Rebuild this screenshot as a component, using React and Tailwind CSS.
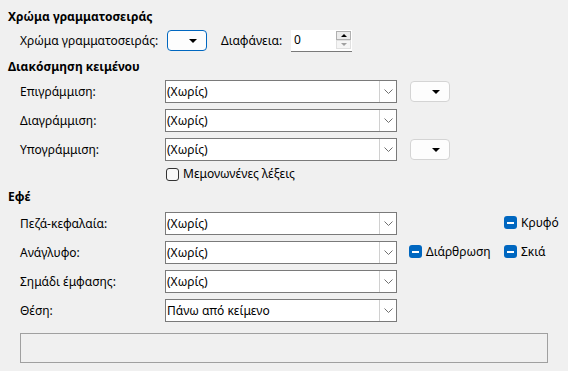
import React from "react";

const font = "font-['Noto_Sans','DejaVu_Sans',sans-serif]";

function Chevron() {
  return (
    <svg width="9" height="5" viewBox="0 0 9 5" className="block">
      <path d="M0.5 0.5 L4.5 4.5 L8.5 0.5" fill="none" stroke="#707070" strokeWidth="1" />
    </svg>
  );
}

function Tri({ color = "#000", w = 8, h = 4, up = false }) {
  return (
    <svg width={w} height={h} viewBox={`0 0 ${w} ${h}`} className="block">
      <path d={up ? `M0 ${h} L${w} ${h} L${w / 2} 0 Z` : `M0 0 L${w} 0 L${w / 2} ${h} Z`} fill={color} />
    </svg>
  );
}

function Combo({ value }) {
  return (
    <div className="flex h-[23px] w-[232px] items-stretch border border-[#7a7a7a] bg-white">
      <div className="flex flex-1 items-center pl-[1px] text-[12px] text-black">{value}</div>
      <div className="flex w-[17px] items-center justify-center border-l border-[#d0d0d0] bg-white">
        <Chevron />
      </div>
    </div>
  );
}

function ColorBtn({ active }) {
  return (
    <div
      className={
        "flex h-[21px] w-[40px] items-center justify-end rounded-[4px] bg-[#fdfdfd] pr-[9px] " +
        (active ? "border border-[#0067c0]" : "border border-[#d4d4d4]")
      }
    >
      <Tri />
    </div>
  );
}

function TriState({ label, className = "" }) {
  return (
    <div className={"flex items-center " + className}>
      <div className="flex h-[13px] w-[13px] items-center justify-center rounded-[3px] bg-[#0067c0]">
        <div className="h-[2px] w-[7px] bg-white" />
      </div>
      <span className="ml-[4px] text-[12px] text-black">{label}</span>
    </div>
  );
}

function Header({ children, className = "" }) {
  return (
    <div className={"flex h-[18px] items-center text-[12px] font-bold text-black " + className}>
      {children}
    </div>
  );
}

function Row({ label, children }) {
  return (
    <div className="flex h-[23px] items-center pl-[12px]">
      <div className="w-[145px] text-[12px] text-black">{label}</div>
      {children}
    </div>
  );
}

export default function App() {
  return (
    <div className={"h-[371px] w-[568px] overflow-hidden bg-[#f0f0f0] px-[8px] pt-[8px] " + font}>
      <Header>Χρώμα γραμματοσειράς</Header>
      <div className="mt-[4px] flex h-[21px] items-center pl-[12px]">
        <div className="w-[147px] text-[12px] text-black">Χρώμα γραμματοσειράς:</div>
        <ColorBtn active />
        <div className="ml-[14px] w-[70px] text-[12px] text-black">Διαφάνεια:</div>
        <div className="flex h-[22px] w-[61px] items-stretch border-b border-[#7a7a7a] bg-white">
          <div className="flex flex-1 items-center pl-[3px] text-[12px] text-black">0</div>
          <div className="flex w-[16px] flex-col justify-center py-[1px] pr-[1px]">
            <div className="flex h-[9px] items-center justify-center border border-[#b0b0b0] bg-[#ececec]">
              <Tri color="#000" w={6} h={3} up />
            </div>
            <div className="flex h-[9px] items-center justify-center border border-[#e0e0e0] bg-[#f5f5f5]">
              <Tri color="#a0a0a0" w={6} h={3} />
            </div>
          </div>
        </div>
      </div>

      <Header className="mt-[7px]">Διακόσμηση κειμένου</Header>
      <div className="mt-[4px] flex flex-col gap-[6px]">
        <Row label="Επιγράμμιση:">
          <Combo value="(Χωρίς)" />
          <div className="ml-[13px]">
            <ColorBtn />
          </div>
        </Row>
        <Row label="Διαγράμμιση:">
          <Combo value="(Χωρίς)" />
        </Row>
        <Row label="Υπογράμμιση:">
          <Combo value="(Χωρίς)" />
          <div className="ml-[13px]">
            <ColorBtn />
          </div>
        </Row>
      </div>
      <div className="mt-[6px] flex h-[14px] items-center pl-[158px]">
        <div className="h-[13px] w-[13px] rounded-[3px] border border-[#333333] bg-[#f8f8f8]" />
        <span className="ml-[4px] text-[12px] text-black">Μεμονωνένες λέξεις</span>
      </div>

      <Header className="mt-[7px]">Εφέ</Header>
      <div className="mt-[6px] flex flex-col gap-[6px]">
        <Row label="Πεζά-κεφαλαία:">
          <Combo value="(Χωρίς)" />
          <div className="ml-[12px] w-[95px]" />
          <TriState label="Κρυφό" className="-mt-[2px]" />
        </Row>
        <Row label="Ανάγλυφο:">
          <Combo value="(Χωρίς)" />
          <TriState label="Διάρθρωση" className="ml-[12px] w-[95px] -mt-[2px]" />
          <TriState label="Σκιά" className="-mt-[2px]" />
        </Row>
        <Row label="Σημάδι έμφασης:">
          <Combo value="(Χωρίς)" />
        </Row>
        <Row label="Θέση:">
          <Combo value="Πάνω από κείμενο" />
        </Row>
      </div>

      <div className="mx-[12px] mt-[11px] h-[30px] border border-[#a0a0a0]" />
    </div>
  );
}
